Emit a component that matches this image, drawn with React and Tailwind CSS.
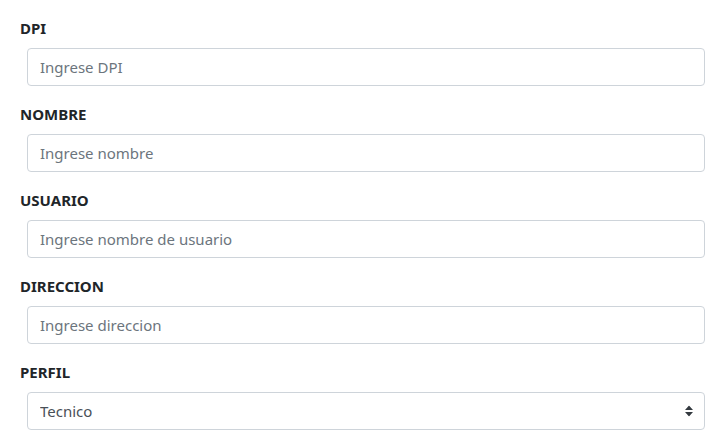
const fields = [
  { label: 'DPI', placeholder: 'Ingrese DPI' },
  { label: 'NOMBRE', placeholder: 'Ingrese nombre' },
  { label: 'USUARIO', placeholder: 'Ingrese nombre de usuario' },
  { label: 'DIRECCION', placeholder: 'Ingrese direccion' },
];

const App = () => {
  return (
    <div className="min-h-[448px] bg-white pt-4 pl-5 pr-5 font-['Noto_Sans','Open_Sans',sans-serif] text-[#212529]">
      {fields.map((f) => (
        <div key={f.label} className="mb-4">
          <label className="mb-2 block text-[15px] font-bold leading-6">{f.label}</label>
          <input
            type="text"
            placeholder={f.placeholder}
            className="ml-[7px] block h-[38px] w-[678px] rounded border border-[#ced4da] px-3 text-[15px] text-[#495057] placeholder:text-[#6c757d] outline-none"
          />
        </div>
      ))}
      <div className="mb-4">
        <label className="mb-2 block text-[15px] font-bold leading-6">PERFIL</label>
        <div className="relative ml-[7px] w-[678px]">
          <select className="block h-[38px] w-full appearance-none rounded border border-[#ced4da] bg-white px-3 text-[15px] text-[#495057] outline-none">
            <option>Tecnico</option>
          </select>
          <svg className="pointer-events-none absolute right-[12px] top-1/2 -translate-y-1/2" width="8" height="11" viewBox="0 0 8 11">
            <path d="M4 0 L8 4.5 H0 Z M0 6.5 H8 L4 11 Z" fill="#343a40" />
          </svg>
        </div>
      </div>
    </div>
  );
};

export default App;
